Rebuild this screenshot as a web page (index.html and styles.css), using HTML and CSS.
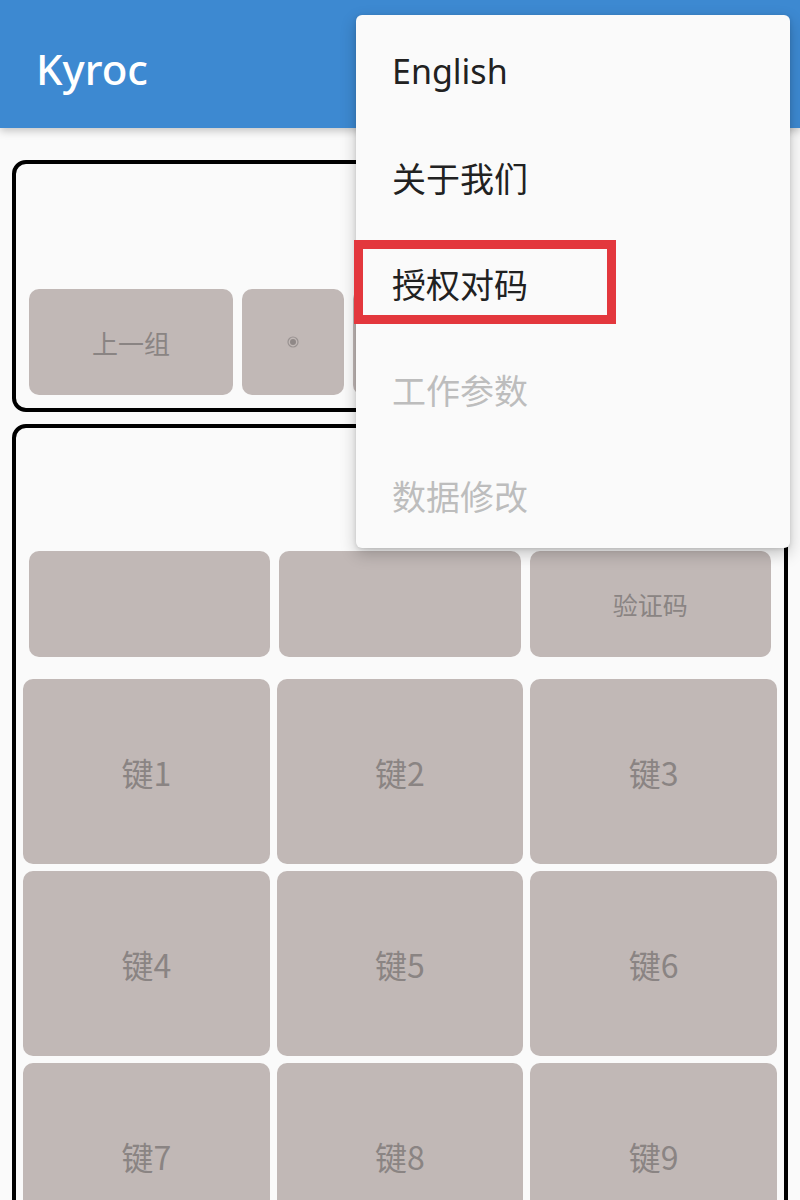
FILE: index.html
```html
<!DOCTYPE html>
<html lang="zh">
<head>
  <meta charset="UTF-8">
  <meta name="viewport" content="width=device-width, initial-scale=1.0">
  <title>Kyroc</title>
  <link rel="stylesheet" href="styles.css">
</head>
<body>
  <header class="app-bar">
    <h1 class="app-title">Kyroc</h1>
  </header>

  <main class="content">
    <section class="card card-group">
      <div class="display"></div>
      <div class="group-row">
        <div class="btn btn-wide">上一组</div>
        <div class="btn btn-small">
          <svg class="dot-icon" viewBox="0 0 12 12" width="12" height="12">
            <circle cx="6" cy="6" r="5" fill="none" stroke="#9a9392" stroke-width="1.2"/>
            <circle cx="6" cy="6" r="3" fill="#8f8887"/>
          </svg>
        </div>
        <div class="btn btn-small"></div>
        <div class="btn btn-small"></div>
        <div class="btn btn-wide">下一组</div>
      </div>
    </section>

    <section class="card card-keys">
      <div class="display display-tall"></div>
      <div class="top-row">
        <div class="btn btn-top"></div>
        <div class="btn btn-top"></div>
        <div class="btn btn-top">验证码</div>
      </div>
      <div class="key-grid">
        <div class="btn key">键1</div>
        <div class="btn key">键2</div>
        <div class="btn key">键3</div>
        <div class="btn key">键4</div>
        <div class="btn key">键5</div>
        <div class="btn key">键6</div>
        <div class="btn key">键7</div>
        <div class="btn key">键8</div>
        <div class="btn key">键9</div>
      </div>
    </section>
  </main>

  <!-- popup menu opened from the app bar -->
  <ul class="popup-menu">
    <li class="menu-item">English</li>
    <li class="menu-item">关于我们</li>
    <li class="menu-item">授权对码</li>
    <li class="menu-item disabled">工作参数</li>
    <li class="menu-item disabled">数据修改</li>
  </ul>
  <div class="highlight-box"></div>
</body>
</html>
```

FILE: styles.css
```css
body {
  margin: 0;
  background: #fafafa;
  font-family: "Noto Sans", "Noto Sans CJK SC", sans-serif;
  overflow: hidden;
  height: 1200px;
}

.app-bar {
  height: 128px;
  box-sizing: border-box;
  padding: 8px 0 0 36px;
  background: #3d89d1;
  box-shadow: 0 3px 8px rgba(0, 0, 0, 0.22);
  display: flex;
  align-items: center;
  position: relative;
  z-index: 1;
}

.app-title {
  margin: 0;
  color: #fff;
  font-size: 42px;
  font-weight: 500;
}

.content {
  padding: 32px 12px 0;
  display: flex;
  flex-direction: column;
  gap: 12px;
}

.card {
  border: 4px solid #000;
  border-radius: 14px;
}

.card-group {
  height: 244px;
  display: flex;
  flex-direction: column;
}

.display {
  height: 125px;
}

.display-tall {
  height: 123px;
}

.group-row {
  display: flex;
  gap: 9px;
  padding: 0 13px;
  height: 106px;
}

.btn {
  background: #c1b8b6;
  border-radius: 10px;
  color: #8a8483;
  font-family: "Noto Sans CJK SC", sans-serif;
  display: flex;
  align-items: center;
  justify-content: center;
}

.btn-wide {
  width: 204px;
  font-size: 26px;
}

.btn-small {
  width: 102px;
}

.group-row .btn:last-child {
  flex: 1;
}

.dot-icon {
  display: block;
}

.top-row {
  display: grid;
  grid-template-columns: repeat(3, 1fr);
  gap: 9px;
  padding: 0 13px;
  height: 106px;
}

.btn-top {
  font-size: 25px;
}

.key-grid {
  display: grid;
  grid-template-columns: repeat(3, 1fr);
  grid-auto-rows: 185px;
  gap: 7px;
  padding: 22px 7px 0;
}

.key {
  font-size: 32px;
}

.popup-menu {
  position: absolute;
  top: 15px;
  left: 356px;
  width: 434px;
  margin: 0;
  padding: 3px 0 0;
  list-style: none;
  background: #fafafa;
  border-radius: 6px;
  box-shadow: 0 6px 16px rgba(0, 0, 0, 0.22), 0 1px 4px rgba(0, 0, 0, 0.12);
  z-index: 2;
}

.menu-item {
  height: 106px;
  display: flex;
  align-items: center;
  padding-left: 36px;
  font-size: 34px;
  color: #212121;
}

.menu-item.disabled {
  color: #bdbdbd;
}

.highlight-box {
  position: absolute;
  top: 240px;
  left: 354px;
  width: 244px;
  height: 66px;
  border: 9px solid #e3373d;
  z-index: 3;
}
```
